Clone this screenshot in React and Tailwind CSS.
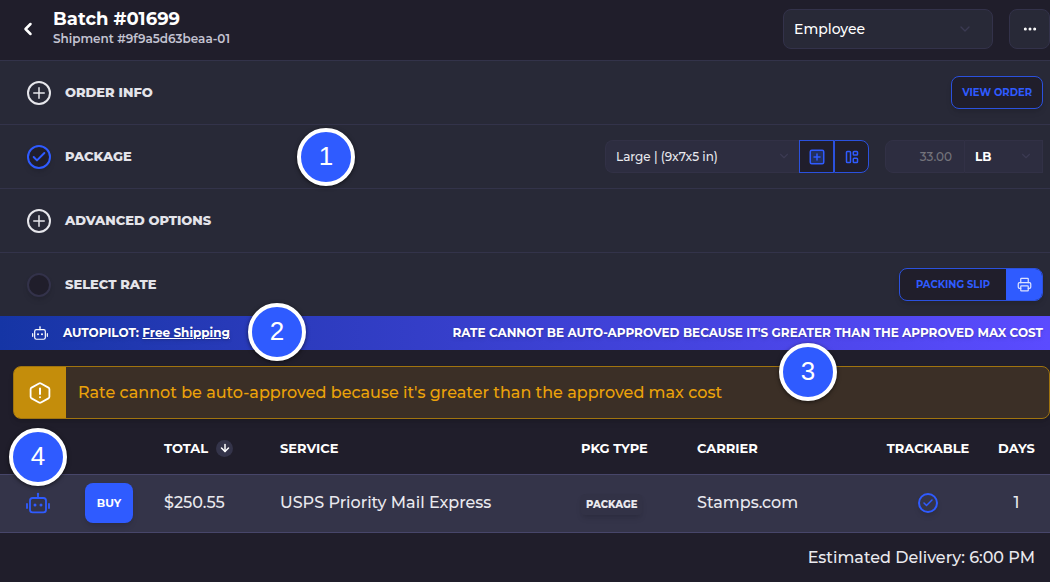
import React, { useState } from 'react';
import clsx from 'clsx';
import {
  ArrowDown, Check, ChevronDown, ChevronLeft, Ellipsis, Plus, Printer, SquarePlus
} from 'lucide-react';

const RATE_MESSAGE = "Rate cannot be auto-approved because it's greater than the approved max cost";

const rates = [
  { id: 1, total: '$250.55', service: 'USPS Priority Mail Express', pkgType: 'PACKAGE', carrier: 'Stamps.com', trackable: true, days: 1, delivery: '6:00 PM' },
];

function RobotIcon({ className }) {
  return (
    <svg viewBox="0 0 24 22" fill="none" stroke="currentColor" strokeWidth="1.8" strokeLinecap="round" className={className} aria-hidden="true">
      <rect x="4" y="6" width="16" height="14.4" rx="2.6" />
      <path d="M12 6V3M1 12v4M23 12v4" />
      <circle cx="12" cy="2" r="1.2" fill="currentColor" stroke="none" />
      <circle cx="9" cy="13" r="1.5" fill="currentColor" stroke="none" />
      <circle cx="15" cy="13" r="1.5" fill="currentColor" stroke="none" />
    </svg>
  );
}

function HexAlertIcon({ className }) {
  return (
    <svg viewBox="0 0 22 22" fill="none" stroke="currentColor" strokeWidth="1.8" strokeLinecap="round" strokeLinejoin="round" className={className} aria-hidden="true">
      <path d="M10 1.5 2.6 5.6Q1.6 6.2 1.6 7.2v7.6q0 1 1 1.6L10 20.5q1 .5 2 0l7.4-4.1q1-.6 1-1.6V7.2q0-1-1-1.6L12 1.5q-1-.5-2 0Z" />
      <path d="M11 6.500v5.500M11 15.200v.1" strokeWidth="2" />
    </svg>
  );
}

function PanelsIcon({ className }) {
  return (
    <svg viewBox="0 0 14 14" fill="none" stroke="currentColor" strokeWidth="1.500" className={className} aria-hidden="true">
      <rect x="1.500" y="1.500" width="4" height="11" rx="0.8" />
      <rect x="8.300" y="1.500" width="4.200" height="3.600" rx="0.8" />
      <rect x="8.300" y="8.200" width="4.200" height="4.300" rx="0.8" />
    </svg>
  );
}

function Callout({ number, className }) {
  return (
    <span className={clsx(
      'absolute z-10 flex size-[58px] justify-center rounded-full border-4 border-white bg-[#2f5bff] pt-1 font-["Liberation_Sans",sans-serif] text-[26px] font-normal leading-10 text-white shadow-[0_1px_4px_rgba(0,0,0,0.6)]',
      className
    )}>
      {number}
    </span>
  );
}

function StatusCircle({ status, label }) {
  if (status === 'expand') {
    return (
      <button aria-label={`Expand ${label}`} className="flex size-6 items-center justify-center rounded-full border-2 border-[#e6e6eb] text-[#e6e6eb]">
        <Plus size={18} strokeWidth={2} />
      </button>
    );
  }
  return (
    <span className={clsx(
      'flex size-6 items-center justify-center rounded-full border-2 bg-[#201e2b] shadow-md',
      status === 'done' ? 'border-[#2f5bff] text-[#2f5bff]' : 'border-[#33324a]'
    )}>
      {status === 'done' && <Check size={16} strokeWidth={3} />}
    </span>
  );
}

function Section({ title, status, children }) {
  return (
    <section className="relative flex h-16 items-center justify-between border-t border-[#33334a] bg-[#282937] pl-[27px] pr-[7px]">
      <div className="flex items-center gap-[14px]">
        <StatusCircle status={status} label={title} />
        <h2 className="text-[13px] font-extrabold text-[#e4e4ea]">{title}</h2>
      </div>
      {children}
    </section>
  );
}

export default function App() {
  const [role, setRole] = useState('Employee');
  const [weight, setWeight] = useState('33.00');
  const [unit, setUnit] = useState('LB');

  return (
    <main className='min-h-screen overflow-x-hidden bg-[#201e2b] font-["Montserrat","Inter",sans-serif] text-[#e9e9ee]'>
      {/* Header */}
      <header className="flex h-[60px] items-center justify-between pb-[2px] pl-[18px]">
        <div className="flex items-center gap-[15px]">
          <button aria-label="Back" className="text-white">
            <ChevronLeft size={20} strokeWidth={3} />
          </button>
          <div>
            <h1 className="text-lg font-bold leading-5 text-white">Batch #01699</h1>
            <p className="text-xs font-semibold leading-5 text-[#c3c3d2]">Shipment #9f9a5d63beaa-01</p>
          </div>
        </div>
        <div className="flex gap-4">
          <div className="relative">
            <select
              aria-label="Role"
              value={role}
              onChange={(e) => setRole(e.target.value)}
              className="h-10 w-[210px] appearance-none rounded-lg border border-[#33324a] bg-[#282937] px-[10px] text-sm font-medium text-white"
            >
              <option>Employee</option>
            </select>
            <ChevronDown size={16} className="pointer-events-none absolute right-5 top-3 text-[#3b3a52]" />
          </div>
          <button aria-label="More actions" className="flex h-10 w-[41px] items-center justify-center rounded-lg border border-[#33324a] bg-[#282937] text-white">
            <Ellipsis size={16} strokeWidth={2.5} />
          </button>
        </div>
      </header>

      {/* Shipment steps */}
      <Section title="ORDER INFO" status="expand">
        <button className="h-[33px] rounded-lg border border-[#2b51de] bg-[#201e2b] px-[10px] text-[10px] font-bold text-[#2f5bff] shadow-md">
          VIEW ORDER
        </button>
      </Section>

      <Section title="PACKAGE" status="done">
        <Callout number={1} className="left-[297px] top-[3px]" />
        <div className="flex gap-4">
          <div className="flex">
            <div className="relative">
              <select aria-label="Package size" className="h-[33px] w-[194px] appearance-none rounded-l-lg border border-r-0 border-[#323146] bg-[#2d2d40] px-[10px] text-xs font-medium">
                <option>Large | (9x7x5 in)</option>
              </select>
              <ChevronDown size={14} className="pointer-events-none absolute right-2 top-[9px] text-[#3b3a52]" />
            </div>
            <button aria-label="Add package" className="flex w-[35px] items-center justify-center border border-[#2b51de] bg-[#201e2b] text-[#2f5bff]">
              <SquarePlus size={18} strokeWidth={2} className="fill-[#23305f]" />
            </button>
            <button aria-label="Package presets" className="flex w-[35px] items-center justify-center rounded-r-lg border border-[#2b51de] bg-[#201e2b] text-[#2f5bff]">
              <PanelsIcon className="size-[14px]" />
            </button>
          </div>
          <div className="flex">
            <input
              aria-label="Weight"
              value={weight}
              onChange={(e) => setWeight(e.target.value)}
              className="h-[33px] w-20 rounded-l-lg border border-[#323146] bg-[#2d2d40] px-3 text-right text-xs font-medium text-[#73737b]"
            />
            <div className="relative">
              <select
                aria-label="Weight unit"
                value={unit}
                onChange={(e) => setUnit(e.target.value)}
                className="h-[33px] w-[78px] appearance-none border border-l-0 border-[#323146] bg-[#2d2d40] px-[10px] text-xs font-bold text-white"
              >
                <option>LB</option>
                <option>OZ</option>
              </select>
              <ChevronDown size={14} className="pointer-events-none absolute right-[10px] top-[9px] text-[#3b3a52]" />
            </div>
          </div>
        </div>
      </Section>

      <Section title="ADVANCED OPTIONS" status="expand" />

      <Section title="SELECT RATE" status="empty">
        <div className="flex overflow-hidden rounded-lg border border-[#2b51de] bg-[#201e2b] shadow-md">
          <button className="h-[31px] px-4 text-[10px] font-bold text-[#2f5bff]">PACKING SLIP</button>
          <button aria-label="Print" className="flex w-9 items-center justify-center bg-[#2f5bff] text-[#dbe2ff]">
            <Printer size={15} />
          </button>
        </div>
      </Section>

      {/* Autopilot bar */}
      <div className="relative flex h-[34px] items-center justify-between bg-linear-to-r from-[#1535a5] to-[#5b4bff] pl-8 pr-[7px] text-xs font-bold text-white">
        <div className="flex items-center gap-[15px]">
          <RobotIcon className="h-4 w-4" />
          <p className="text-shadow-md">
            AUTOPILOT: <a href="#free-shipping" className="underline">Free Shipping</a>
          </p>
        </div>
        <p className="uppercase text-shadow-md">{RATE_MESSAGE}</p>
        <Callout number={2} className="left-[248px] -top-[13px]" />
      </div>

      {/* Warning */}
      <div role="alert" className="relative ml-[13px] mt-4 flex h-[53px] items-center rounded-lg border border-[#a0740f] bg-[#3b2f26] text-base font-medium text-[#eba20a] shadow-md">
        <span className="flex h-full w-[52px] items-center justify-center rounded-l-md bg-[#c48d0b] text-white">
          <HexAlertIcon className="size-[22px]" />
        </span>
        <p className="pl-3">{RATE_MESSAGE}</p>
        <Callout number={3} className="right-[212px] -top-6" />
      </div>

      {/* Rates */}
      <div className="relative">
        <Callout number={4} className="left-[9px] top-[9px]" />
        <table className="w-full table-fixed text-left">
          <colgroup>
            <col className="w-[75px]" />
            <col className="w-[89px]" />
            <col className="w-[116px]" />
            <col />
            <col className="w-[116px]" />
            <col className="w-[176px]" />
            <col className="w-[110px]" />
            <col className="w-[67px]" />
          </colgroup>
          <thead>
            <tr className="h-[55px] text-[13px] font-bold text-white">
              <th aria-label="Autopilot" />
              <th aria-label="Purchase" />
              <th className="pt-1">
                <button className="flex items-center gap-2">
                  TOTAL
                  <span className="flex size-[17px] items-center justify-center rounded-full bg-[#34344a]">
                    <ArrowDown size={12} strokeWidth={3} />
                  </span>
                </button>
              </th>
              <th className="pt-1">SERVICE</th>
              <th className="pt-1">PKG TYPE</th>
              <th className="pt-1">CARRIER</th>
              <th className="pt-1 text-center">TRACKABLE</th>
              <th className="pt-1 text-center">DAYS</th>
            </tr>
          </thead>
          <tbody>
            {rates.map((rate) => (
              <tr key={rate.id} className="h-[58px] border-y border-[#47466a] bg-[#343449] text-base font-medium">
                <td>
                  <RobotIcon className="mx-auto h-[22px] w-6 text-[#2f5bff]" />
                </td>
                <td className="pl-[10px]">
                  <button className="h-10 w-12 rounded-lg bg-[#2f5bff] text-[11px] font-bold text-white shadow-md">BUY</button>
                </td>
                <td>{rate.total}</td>
                <td>{rate.service}</td>
                <td>
                  <span className="rounded bg-[#323246] px-[5px] py-1 text-[10px] font-extrabold shadow-md">{rate.pkgType}</span>
                </td>
                <td>{rate.carrier}</td>
                <td>
                  {rate.trackable && (
                    <span className="mx-auto flex size-5 items-center justify-center rounded-full border-2 border-[#2f5bff] text-[#2f5bff] shadow-md">
                      <Check size={12} strokeWidth={3} />
                    </span>
                  )}
                </td>
                <td className="text-center">{rate.days}</td>
              </tr>
            ))}
          </tbody>
          <tfoot>
            <tr className="h-[50px]">
              <td colSpan={8} className="pr-[15px] pt-[2px] text-right text-base font-medium">
                Estimated Delivery: {rates[0].delivery}
              </td>
            </tr>
          </tfoot>
        </table>
      </div>
    </main>
  );
}
